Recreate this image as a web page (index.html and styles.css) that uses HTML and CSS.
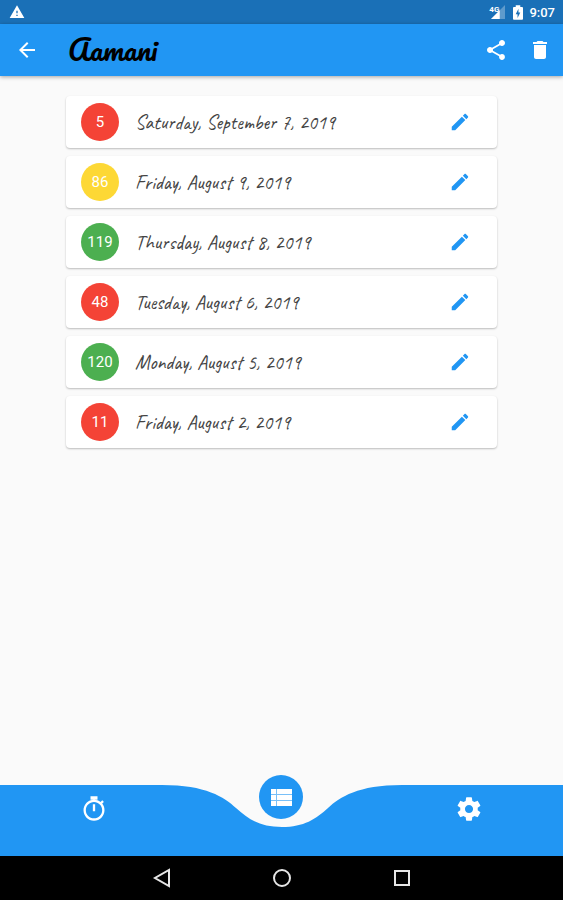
FILE: index.html
```html
<!DOCTYPE html>
<html lang="en">

<head>
    <meta charset="UTF-8">
    <meta name="viewport" content="width=device-width, initial-scale=1.0">
    <title>Aamani</title>
    <link rel="stylesheet" href="styles.css">
</head>

<body>
    <!-- Status bar -->
    <div class="status-bar">
        <svg class="status-warning" viewBox="0 0 24 24" aria-hidden="true">
            <path d="M1 21h22L12 2 1 21zm12-3h-2v-2h2v2zm0-4h-2v-4h2v4z"/>
        </svg>
        <div class="status-right">
            <span class="network">4G</span>
            <svg class="signal" viewBox="0 0 16 16" aria-hidden="true">
                <path class="signal-dim" d="M16 0v16H0z"/>
                <path d="M10 6v10H0z"/>
            </svg>
            <svg class="battery" viewBox="0 0 11 16" aria-hidden="true">
                <path fill-rule="evenodd" d="M3 0h5v2h2q1 0 1 1v12q0 1-1 1H1q-1 0-1-1V3q0-1 1-1h2zM6 4L3 10h2v4l3-6H6z"/>
            </svg>
            <span class="clock">9:07</span>
        </div>
    </div>

    <header class="app-bar">
        <button class="icon-button" type="button" aria-label="Back">
            <svg viewBox="0 0 24 24"><path d="M20 11H7.83l5.59-5.59L12 4l-8 8 8 8 1.41-1.41L7.83 13H20v-2z"/></svg>
        </button>
        <h1>Aamani</h1>
        <button class="icon-button" type="button" aria-label="Share">
            <svg viewBox="0 0 24 24"><path d="M18 16.08c-.76 0-1.44.3-1.96.77L8.91 12.7c.05-.23.09-.46.09-.7s-.04-.47-.09-.7l7.05-4.11c.54.5 1.25.81 2.04.81 1.66 0 3-1.34 3-3s-1.34-3-3-3-3 1.34-3 3c0 .24.04.47.09.7L8.04 9.81C7.5 9.31 6.79 9 6 9c-1.66 0-3 1.34-3 3s1.34 3 3 3c.79 0 1.5-.31 2.04-.81l7.12 4.16c-.05.21-.08.43-.08.65 0 1.61 1.31 2.92 2.92 2.92s2.92-1.31 2.92-2.92-1.31-2.92-2.92-2.92z"/></svg>
        </button>
        <button class="icon-button" type="button" aria-label="Delete">
            <svg viewBox="0 0 24 24"><path d="M6 19c0 1.1.9 2 2 2h8c1.1 0 2-.9 2-2V7H6v12zM19 4h-3.5l-1-1h-5l-1 1H5v2h14V4z"/></svg>
        </button>
    </header>

    <!-- Pencil shared by every row -->
    <svg class="symbols" aria-hidden="true">
        <symbol id="pencil" viewBox="0 0 24 24">
            <path d="M3 17.25V21h3.75L17.81 9.94l-3.75-3.75L3 17.25zM20.71 7.04c.39-.39.39-1.02 0-1.41l-2.34-2.34c-.39-.39-1.02-.39-1.41 0l-1.83 1.83 3.75 3.75 1.83-1.83z"/>
        </symbol>
    </svg>

    <main>
        <ul class="entries">
            <li class="entry">
                <span class="score red">5</span>
                <span class="date">Saturday, September 7, 2019</span>
                <button class="edit" type="button" aria-label="Edit"><svg><use href="#pencil"/></svg></button>
            </li>
            <li class="entry">
                <span class="score yellow">86</span>
                <span class="date">Friday, August 9, 2019</span>
                <button class="edit" type="button" aria-label="Edit"><svg><use href="#pencil"/></svg></button>
            </li>
            <li class="entry">
                <span class="score green">119</span>
                <span class="date">Thursday, August 8, 2019</span>
                <button class="edit" type="button" aria-label="Edit"><svg><use href="#pencil"/></svg></button>
            </li>
            <li class="entry">
                <span class="score red">48</span>
                <span class="date">Tuesday, August 6, 2019</span>
                <button class="edit" type="button" aria-label="Edit"><svg><use href="#pencil"/></svg></button>
            </li>
            <li class="entry">
                <span class="score green">120</span>
                <span class="date">Monday, August 5, 2019</span>
                <button class="edit" type="button" aria-label="Edit"><svg><use href="#pencil"/></svg></button>
            </li>
            <li class="entry">
                <span class="score red">11</span>
                <span class="date">Friday, August 2, 2019</span>
                <button class="edit" type="button" aria-label="Edit"><svg><use href="#pencil"/></svg></button>
            </li>
        </ul>
    </main>

    <nav class="tab-bar">
        <!-- Blue bar with the dip under the active tab -->
        <div class="tab-shape">
            <span></span>
            <svg viewBox="0 0 240 71" aria-hidden="true">
                <path d="M0 0C44 0 62 12 74 23S98 42 120 42 154 34 166 23 196 0 240 0V71H0z"/>
            </svg>
            <span></span>
        </div>
        <button class="tab" type="button" aria-label="Timer">
            <svg viewBox="0 0 24 24"><path d="M15 1H9v3h6V1zm-4 13h2V8h-2v6zm8.03-6.61l1.42-1.42c-.43-.51-.9-.99-1.41-1.41l-1.42 1.42C16.07 4.74 14.12 4 12 4c-4.97 0-9 4.03-9 9s4.02 9 9 9 9-4.03 9-9c0-2.12-.74-4.07-1.97-5.61zM12 20c-3.87 0-7-3.13-7-7s3.13-7 7-7 7 3.13 7 7-3.13 7-7 7z"/></svg>
        </button>
        <button class="tab active" type="button" aria-label="List">
            <svg viewBox="0 0 28 28">
                <path d="M4 6h5v5H4zM10 6h15v5H10zM4 12h5v5H4zM10 12h15v5H10zM4 18h5v5H4zM10 18h15v5H10z"/>
                <path opacity="0.4" d="M4 6h21v17H4z"/>
            </svg>
        </button>
        <button class="tab" type="button" aria-label="Settings">
            <svg viewBox="0 0 24 24"><path d="M19.43 12.98c.04-.32.07-.64.07-.98s-.03-.66-.07-.98l2.11-1.65c.19-.15.24-.42.12-.64l-2-3.46c-.12-.22-.39-.3-.61-.22l-2.49 1c-.52-.4-1.08-.73-1.69-.98l-.38-2.65C14.46 2.18 14.25 2 14 2h-4c-.25 0-.46.18-.49.42l-.38 2.65c-.61.25-1.17.59-1.69.98l-2.49-1c-.23-.09-.49 0-.61.22l-2 3.46c-.13.22-.07.49.12.64l2.11 1.65c-.04.32-.07.65-.07.98s.03.66.07.98l-2.11 1.65c-.19.15-.24.42-.12.64l2 3.46c.12.22.39.3.61.22l2.49-1c.52.4 1.08.73 1.69.98l.38 2.65c.03.24.24.42.49.42h4c.25 0 .46-.18.49-.42l.38-2.65c.61-.25 1.17-.59 1.69-.98l2.49 1c.23.09.49 0 .61-.22l2-3.46c.12-.22.07-.49-.12-.64l-2.11-1.65zM12 15.5c-1.93 0-3.5-1.57-3.5-3.5s1.57-3.5 3.5-3.5 3.5 1.57 3.5 3.5-1.57 3.5-3.5 3.5z"/></svg>
        </button>
    </nav>

    <!-- System navigation -->
    <div class="system-bar">
        <button type="button" aria-label="System back">
            <svg viewBox="0 0 20 20"><path d="M17 2v16L3 10z"/></svg>
        </button>
        <button type="button" aria-label="Home">
            <svg viewBox="0 0 20 20"><circle cx="10" cy="10" r="8"/></svg>
        </button>
        <button type="button" aria-label="Recent apps">
            <svg viewBox="0 0 20 20"><rect x="3" y="3" width="14" height="14"/></svg>
        </button>
    </div>
</body>

</html>
```
FILE: styles.css
```css
* {
    box-sizing: border-box;
}

body {
    display: flex;
    flex-direction: column;
    min-height: 100vh;
    margin: 0;
    background-color: #fafafa;
    font-family: Roboto, sans-serif;
}

button {
    display: flex;
    align-items: center;
    justify-content: center;
    padding: 0;
    border: none;
    background: none;
    color: inherit;
    cursor: pointer;
}

svg {
    display: block;
    fill: currentColor;
}

.symbols {
    position: absolute;
    width: 0;
    height: 0;
}

/* Status bar */
.status-bar {
    display: flex;
    align-items: center;
    justify-content: space-between;
    height: 24px;
    padding: 0 8px;
    background-color: #1a70b7;
    color: #fff;
}

.status-warning {
    width: 18px;
    height: 16px;
}

.status-right {
    display: flex;
    align-items: center;
}

.network {
    align-self: flex-start;
    font-size: 8px;
    font-weight: 700;
    line-height: 10px;
}

.signal {
    width: 14px;
    height: 14px;
    margin-left: -8px;
}

.signal-dim {
    opacity: 0.3;
}

.battery {
    width: 10px;
    height: 15px;
    margin: 0 6px 0 8px;
}

.clock {
    font-size: 13px;
    font-weight: 500;
}

/* App bar */
.app-bar {
    display: flex;
    align-items: center;
    height: 52px;
    padding: 0 3px 0 7px;
    background-color: #2196f3;
    box-shadow: 0 1px 4px rgba(0, 0, 0, 0.35);
    color: #fff;
}

.app-bar h1 {
    flex: 1;
    margin: 0 0 0 21px;
    color: #000;
    font-family: Pacifico, cursive;
    font-size: 28px;
    font-weight: 400;
    line-height: 32px;
}

.icon-button {
    width: 40px;
    height: 40px;
}

.icon-button + .icon-button {
    margin-left: 4px;
}

.icon-button svg {
    width: 24px;
    height: 24px;
}

main {
    flex: 1;
    padding: 20px 66px;
}

/* List of dates */
.entries {
    display: flex;
    flex-direction: column;
    gap: 8px;
    margin: 0;
    padding: 0;
    list-style: none;
}

.entry {
    display: flex;
    align-items: center;
    gap: 16px;
    height: 52px;
    padding: 0 21px 0 15px;
    border-radius: 4px;
    background-color: #fff;
    box-shadow: 0 1px 2px rgba(0, 0, 0, 0.25);
}

.score {
    display: flex;
    align-items: center;
    justify-content: center;
    width: 38px;
    height: 38px;
    border-radius: 50%;
    color: #fff;
    font-size: 15px;
}

.red {
    background-color: #f44336;
}

.yellow {
    background-color: #fdd835;
}

.green {
    background-color: #4caf50;
}

.date {
    flex: 1;
    color: #444;
    font-family: Caveat, cursive;
    font-size: 20px;
}

.edit {
    width: 32px;
    height: 32px;
    color: #2196f3;
}

.edit svg {
    width: 22px;
    height: 22px;
}

/* Bottom tabs */
.tab-bar {
    position: relative;
    display: grid;
    grid-template-columns: repeat(3, 1fr);
    justify-items: center;
    height: 71px;
    color: #fff;
}

.tab-shape {
    position: absolute;
    inset: 0;
    display: flex;
    color: #2196f3;
}

.tab-shape span {
    flex: 1;
    background-color: #2196f3;
}

.tab-shape svg {
    width: 240px;
    height: 71px;
}

.tab {
    position: relative;
    width: 44px;
    height: 48px;
}

.tab svg {
    width: 28px;
    height: 28px;
}

/* Raised over the edge of the bar */
.tab.active {
    height: 44px;
    margin-top: -10px;
    border-radius: 50%;
    background-color: #2196f3;
}

/* System navigation */
.system-bar {
    display: flex;
    align-items: center;
    justify-content: center;
    gap: 100px;
    height: 44px;
    background-color: #000;
    color: #e6e6e6;
}

.system-bar svg {
    width: 20px;
    height: 20px;
    fill: none;
    stroke: currentColor;
    stroke-width: 2;
}
```
